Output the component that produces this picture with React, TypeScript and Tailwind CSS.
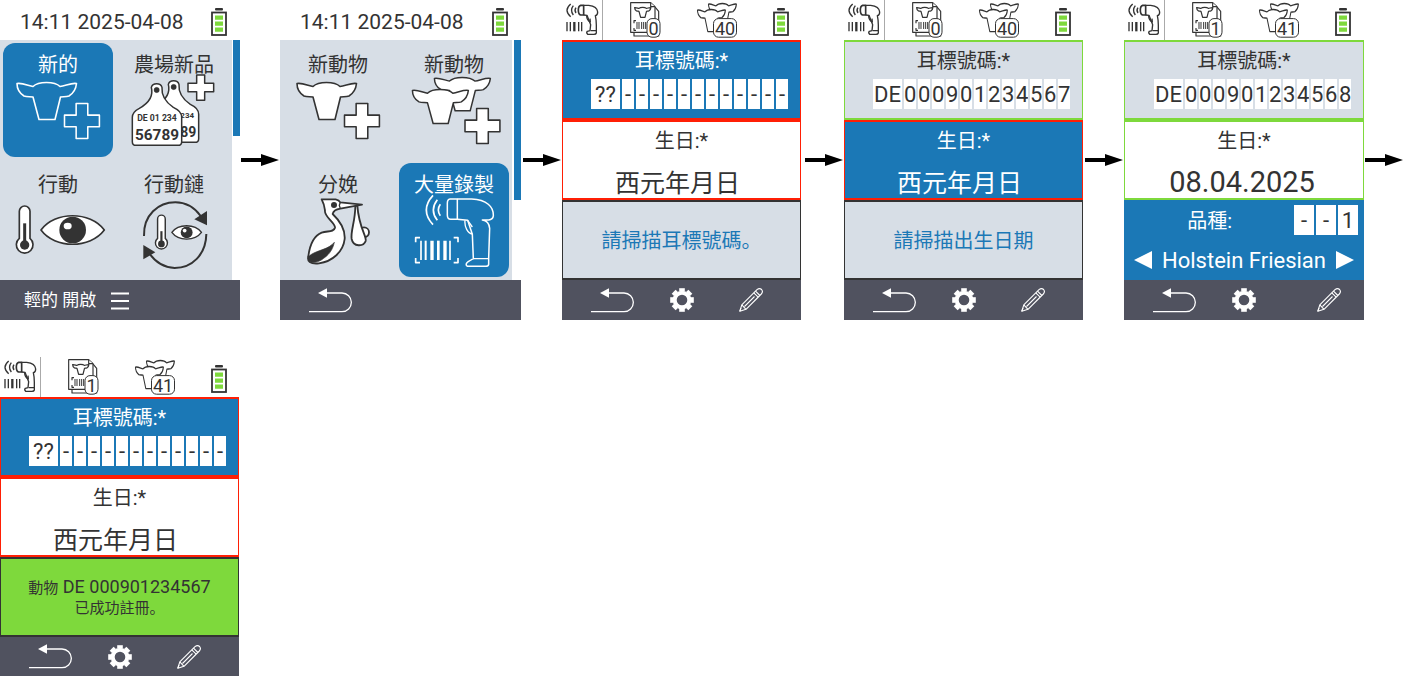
import { ReactNode, useId } from "react";

const COW =
  "M1 1C6 0 12 3 17 4C20 1 25 0 30.500 0C36 0 41 1 44 4C50 3 56 0 60.500 1C60 6 57 11 53 13.500C50 14.500 47 14 44.500 14.500L39 37L23 37L17 14.500C14 14 11 14.500 8 13.500C4 11 1 6 1 1Z";
const PLUS = "M12 0H24V12H36V24H24V36H12V24H0V12H12Z";
const THERMO =
  "M58 154A16 16 0 0 1 90 154V235A25 25 0 1 1 58 235Z";
const EYE = "M123 210C165 153 270 153 313 210C270 267 165 267 123 210Z";

/* ---------- tile drawings (110 x 84 canvas) ---------- */

function TileArt({ children }: { children: ReactNode }) {
  return (
    <svg viewBox="0 0 110 84" className="h-[84px] w-[110px] overflow-visible" aria-hidden="true">
      {children}
    </svg>
  );
}

function CowPlus({ fill, stroke }: { fill: string; stroke: string }) {
  return (
    <TileArt>
      <g fill={fill} stroke={stroke} strokeWidth="1.6" strokeLinejoin="round">
        <path d={COW} transform="translate(13 9.500)" />
        <path d={PLUS} transform="translate(61.500 30.500) scale(.97)" />
      </g>
    </TileArt>
  );
}

function CowsPlus() {
  return (
    <TileArt>
      <g fill="#fff" stroke="#333" strokeWidth="1.6" strokeLinejoin="round">
        <path d={COW} transform="translate(34.500 4.500) scale(.94 .9)" />
        <path d={COW} transform="translate(12.500 16.500) scale(.94 .92)" />
        <path d={PLUS} transform="translate(66 35.500) scale(.97)" />
      </g>
    </TileArt>
  );
}

function EarTags() {
  const tag =
    "M454 262C458 248 482 248 486 262C484 285 495 305 520 322Q545 333 545 352V425Q545 436 534 436H408Q397 436 397 425V352Q397 336 418 325C448 308 460 285 454 262Z";
  return (
    <TileArt>
      <g transform="translate(-119 -73) scale(.33333)" stroke="#333" strokeLinejoin="round" fill="#fff">
        <path d={tag} transform="translate(51 -9)" strokeWidth="4.500" />
        <circle cx="521" cy="261" r="8" fill="#333" />
        <g fill="#333" stroke="none" fontFamily="Roboto, sans-serif" fontWeight="700">
          <text x="541" y="355" fontSize="24">234</text>
          <text x="541" y="411" fontSize="42">89</text>
        </g>
        <path d={tag} strokeWidth="4.500" />
        <circle cx="470" cy="270" r="8" fill="#333" />
        <g fill="#333" stroke="none" fontFamily="Roboto, sans-serif" fontWeight="700" textAnchor="middle">
          <text x="471" y="364" fontSize="26">DE 01 234</text>
          <text x="471" y="419" fontSize="46">56789</text>
        </g>
        <path d="M590 225H614V250H641V275H614V301H590V275H564V250H590Z" strokeWidth="4.500" />
      </g>
    </TileArt>
  );
}

function ThermoEye() {
  return (
    <TileArt>
      <g transform="translate(-3 -33) scale(.33333)">
        <path d={THERMO} fill="#fff" stroke="#333" strokeWidth="5" />
        <path d="M74 190V250" stroke="#333" strokeWidth="9" />
        <circle cx="74" cy="255" r="14" fill="#333" />
        <path d={EYE} fill="#fff" stroke="#333" strokeWidth="5" strokeLinejoin="round" />
        <circle cx="218" cy="210" r="40" fill="#333" />
        <ellipse cx="203" cy="198" rx="12" ry="10" fill="#fff" />
      </g>
    </TileArt>
  );
}

function ActionChain() {
  return (
    <TileArt>
      <g transform="translate(-119 -33) scale(.33333)">
        <path d="M432 228C430 165 475 127 526 127C560 127 585 145 602 168" fill="none" stroke="#333" strokeWidth="6" />
        <path d="M621 153V196L583 178Z" fill="#333" />
        <path d="M619 222C618 285 575 324 524 324C490 322 465 305 448 280" fill="none" stroke="#333" strokeWidth="6" />
        <path d="M430 255V298L466 277Z" fill="#333" />
        <g transform="translate(431 66) scale(.72)">
          <path d={THERMO} fill="#fff" stroke="#333" strokeWidth="6" />
          <path d="M74 205V250" stroke="#333" strokeWidth="9" />
          <circle cx="74" cy="258" r="14" fill="#333" />
        </g>
        <g transform="translate(458 119) scale(.468)">
          <path d={EYE} fill="#fff" stroke="#333" strokeWidth="9" strokeLinejoin="round" />
          <circle cx="218" cy="210" r="38" fill="#333" />
          <circle cx="205" cy="198" r="12" fill="#fff" />
        </g>
      </g>
    </TileArt>
  );
}

function Stork() {
  return (
    <TileArt>
      <g transform="translate(-8 -38) scale(.33333)" fill="#fff" stroke="#333" strokeWidth="5.500" strokeLinejoin="round">
        <circle cx="267" cy="232" r="15" />
        <path d="M241 152C241 200 226 228 230 252C235 277 266 275 272 258C276 244 252 220 247 152Z" />
        <path d="M140 133H182Q192 135 196 142L261 149L196 161Q176 164 173 177C192 195 211 222 209 252C205 290 172 320 132 325C105 328 96 318 100 304C104 272 116 243 140 233C158 227 176 232 180 218C181 202 146 185 150 166Q148 148 140 133Z" />
        <path d="M196 142L193 151L196 161" fill="none" strokeWidth="4" />
        <path d="M178 262C160 284 130 284 106 300Q98 304 101 314C106 328 132 322 146 310C166 296 174 280 178 262Z" fill="#333" strokeWidth="2" />
        <circle cx="177" cy="150" r="9" fill="#333" stroke="none" />
      </g>
    </TileArt>
  );
}

function ScannerLarge() {
  return (
    <TileArt>
      <g transform="translate(-124 -38) scale(.33333)" fill="none" stroke="#fff" strokeWidth="4.500" strokeLinejoin="round">
        <path d="M496 148Q484 165 496 182M487 134Q463 165 487 196M474 121Q434 165 474 209" strokeWidth="5" />
        <path d="M547 132H525Q517 133 517 145V180Q517 193 527 193H547Z" />
        <path d="M547 132H590C635 134 656 155 655 182Q654 194 641 195H622Q642 198 644 220L641 309V328Q640 334 632 334H582Q572 334 574 326Q576 321 595 311L592 238L578 196L547 193" />
        <path d="M570 196C568 216 578 235 592 237M578 196L592 216M595 311H641" strokeWidth="4" />
        <path d="M435 248H422V262M536 248H549V262M435 323H422V309M536 323H549V309" strokeWidth="5" />
        <path d="M438 257V315M525 257V315" strokeWidth="5" />
        <path d="M452 257V315" strokeWidth="6" />
        <path d="M471 257V315M510 257V315" strokeWidth="10" />
        <path d="M490 257V315" strokeWidth="8" />
      </g>
    </TileArt>
  );
}

/* ---------- status bar drawings ---------- */

function Battery() {
  return (
    <svg viewBox="0 0 16 28" className="h-7 w-4 shrink-0" role="img" aria-label="電池">
      <rect x="4" y="0" width="8" height="2.500" rx="1" fill="#333" />
      <rect x="1" y="4.500" width="14" height="22.500" fill="#fff" stroke="#333" strokeWidth="1.8" />
      <path d="M4 7.500h8v4.300h-8zM4 13.500h8v4.300h-8zM4 19.500h8v4.300h-8z" fill="#7ed93c" />
    </svg>
  );
}

function ScannerSmall() {
  return (
    <svg viewBox="0 0 40 40" className="size-10" aria-hidden="true">
      <g transform="translate(-6 0) scale(.33333)" fill="none" stroke="#333" strokeWidth="4" strokeLinejoin="round">
        <path d="M60 23Q54 31 60 39M52 17Q41 31 52 45M44 12Q22 31 44 50" />
        <path d="M83 16H74Q67 18 67 30Q67 43 74 45H83Z" strokeWidth="5" />
        <path d="M83 16H98Q124 19 125 36Q125 46 118 47Q121 60 121 75V99Q120 103 114 103H95Q90 98 94 94L102 92L104 74L93 46L83 45" />
        <path d="M92 47Q92 60 103 66L102 56M104 92H121" strokeWidth="4" />
        <path d="M33 66V94M43 66V94M68 66V94M77 66V94" strokeWidth="4" />
        <path d="M55 66V94" strokeWidth="7" />
      </g>
    </svg>
  );
}

function Badge({ x, width, value }: { x: number; width: number; value: string }) {
  return (
    <>
      <rect x={x} y="18.600" width={width} height="18.600" rx="5" fill="#fff" stroke="#333" />
      <text
        x={x + width / 2}
        y="34.500"
        textAnchor="middle"
        fontFamily="Roboto, sans-serif"
        fontSize="18"
        fill="#333"
      >
        {value}
      </text>
    </>
  );
}

function ScannedSheets({ count }: { count: string }) {
  return (
    <svg viewBox="0 0 31 40" className="h-10 w-[31px] shrink-0 overflow-visible" role="img" aria-label="已掃描">
      <g transform="translate(-74 0) scale(.33333)" fill="#fff" stroke="#333" strokeWidth="3.500" strokeLinejoin="round">
        <path d="M234 22H298L308 34V108H234Z" />
        <path d="M224 8H284L297 20V97H224Z" />
        <path d="M284 8V20H297" />
        <path d={COW} transform="translate(235 22) scale(.82)" strokeWidth="4.500" />
        <path d="M240 62H234V70M234 84V91H240M280 62H286" fill="none" />
        <path d="M243 66V87M249 66V87M257 66V87M263 66V87M269 66V87" fill="none" strokeWidth="3" />
      </g>
      <Badge x={17} width={13} value={count} />
    </svg>
  );
}

function HerdCount({ count }: { count: string }) {
  return (
    <svg viewBox="0 0 40 40" className="size-10 shrink-0 overflow-visible" role="img" aria-label="動物數量">
      <g fill="#fff" stroke="#333" strokeWidth="2.200" strokeLinejoin="round">
        <path d={COW} transform="translate(11 3.500) scale(.47 .6)" />
        <path d={COW} transform="translate(0 9.500) scale(.47 .6)" />
      </g>
      <Badge x={16.500} width={23} value={count} />
    </svg>
  );
}

/* ---------- footer drawings ---------- */

function ReturnIcon() {
  return (
    <svg viewBox="0 0 43 25" className="h-[25px] w-[43px]" aria-hidden="true">
      <path d="M9 5L18 .3V9.700Z" fill="#fff" />
      <path d="M17 5H33A9.300 9.300 0 0 1 33 23.700H0" fill="none" stroke="#fff" strokeWidth="1.300" />
    </svg>
  );
}

function GearIcon() {
  return (
    <svg viewBox="-12 -12 24 24" className="size-6" aria-hidden="true">
      <circle r="7.300" fill="none" stroke="#fff" strokeWidth="4" />
      {[0, 45, 90, 135, 180, 225, 270, 315].map((angle) => (
        <path key={angle} d="M-2.800 -8.500V-11.800H2.800V-8.500Z" fill="#fff" transform={`rotate(${angle})`} />
      ))}
    </svg>
  );
}

function PencilIcon() {
  return (
    <svg viewBox="0 0 24 24" className="size-6" fill="none" stroke="#fff" strokeWidth="1.100" strokeLinejoin="round" aria-hidden="true">
      <path d="M.8 23.300L2.800 16.800L18 1.600Q20.500 -.4 22.600 1.500Q24.400 3.800 22.300 6L7 21.300Z" />
      <path d="M2.800 16.800L7 21.300M14.800 4.800L19.200 9.200M16.500 3.100L20.900 7.500M15.500 8.500L5.500 18.500M.8 23.300L2 20" />
    </svg>
  );
}

function StepArrow() {
  return (
    <svg viewBox="0 0 38 12" className="h-3 w-[38px]" aria-hidden="true">
      <path d="M0 4H20V0L38 6L20 12V8H0Z" fill="#000" />
    </svg>
  );
}

/* ---------- screens ---------- */

type Tile = { label: string; art: ReactNode; active?: boolean };

function MenuScreen({
  tiles,
  thumb,
  wide,
  footer,
}: {
  tiles: Tile[];
  thumb: string;
  wide?: boolean;
  footer: ReactNode;
}) {
  return (
    <section className={`flex shrink-0 flex-col ${wide ? "w-[241px]" : "w-60"}`}>
      <header className="flex h-10 items-center justify-between pl-5 pr-[13px] pt-1">
        <time className="text-[21px] leading-8">14:11 2025-04-08</time>
        <Battery />
      </header>
      <div className="flex h-60 justify-between">
        <nav className="grid w-[232px] grid-cols-2 grid-rows-2 bg-[#d7dee6]">
          {tiles.map((tile, i) => (
            <button
              key={i}
              type="button"
              className={`m-[3px] flex flex-col items-center rounded-xl text-xl ${
                tile.active ? "bg-[#1b78b6] text-white" : ""
              }`}
            >
              <span className="h-[30px] pt-3 leading-5">{tile.label}</span>
              {tile.art}
            </button>
          ))}
        </nav>
        <div className="w-[7px]">
          <div className={`bg-[#1b78b6] ${thumb}`} />
        </div>
      </div>
      <footer className="flex h-10 items-center bg-[#50525f] text-white">{footer}</footer>
    </section>
  );
}

type Tone = "plain" | "soft" | "active";
const TONES: Record<Tone, string> = {
  plain: "bg-white",
  soft: "bg-[#d7dee6]",
  active: "bg-[#1b78b6] text-white",
};

function Panel({ tone, valid, children }: { tone: Tone; valid: boolean; children: ReactNode }) {
  return (
    <div
      className={`flex h-20 flex-col border-x border-y-2 pt-[5px] ${TONES[tone]} ${
        valid ? "border-[#7ed93c]" : "border-[#ff1f05]"
      }`}
    >
      {children}
    </div>
  );
}

function EarTagField({ cells, tone, valid }: { cells: string[]; tone: Tone; valid: boolean }) {
  const id = useId();
  return (
    <Panel tone={tone} valid={valid}>
      <label htmlFor={id} className="text-center text-xl leading-7">
        耳標號碼:*
      </label>
      <div className="mt-1 flex justify-end gap-0.5 pr-3">
        {cells.map((cell, i) => (
          <input
            key={i}
            id={i === 0 ? id : undefined}
            aria-label={i === 0 ? undefined : `耳標號碼 ${i + 1}`}
            defaultValue={cell}
            className={`h-[30px] bg-white text-center text-[22px] text-[#333] ${i === 0 ? "w-[29px]" : "w-3"}`}
          />
        ))}
      </div>
    </Panel>
  );
}

function BirthField({ value, tone, valid }: { value?: string; tone: Tone; valid: boolean }) {
  const id = useId();
  return (
    <Panel tone={tone} valid={valid}>
      <label htmlFor={id} className="text-center text-xl leading-7">
        生日:*
      </label>
      <input
        id={id}
        defaultValue={value}
        placeholder="西元年月日"
        className={`mt-auto h-[30px] w-full bg-transparent text-center text-[29px] placeholder:text-[25px] placeholder:text-current placeholder:opacity-100 ${
          value ? "pr-1" : "pr-2"
        }`}
      />
    </Panel>
  );
}

function Message({ success, children }: { success?: boolean; children: ReactNode }) {
  return (
    <p
      className={`flex h-20 flex-col items-center justify-center border-x border-y-2 border-[#333] ${
        success ? "bg-[#7ed93c] text-[18px] leading-5" : "bg-[#d7dee6] pt-0.5 text-xl text-[#1b78b6]"
      }`}
    >
      {children}
    </p>
  );
}

function BreedField() {
  const id = useId();
  return (
    <div className="flex h-20 flex-col bg-[#1b78b6] text-white">
      <div className="flex h-10 items-center justify-end gap-0.5 pr-1.5">
        <label htmlFor={id} className="mr-[60px] pt-0.5 text-xl">
          品種:
        </label>
        {["-", "-", "1"].map((cell, i) => (
          <input
            key={i}
            id={i === 0 ? id : undefined}
            aria-label={i === 0 ? undefined : `品種 ${i + 1}`}
            defaultValue={cell}
            className="h-[30px] w-5 bg-white text-center text-[22px] text-[#333]"
          />
        ))}
      </div>
      <div className="flex h-10 items-center justify-between px-[10px]">
        <button type="button" aria-label="上一個">
          <svg viewBox="0 0 18 18" className="size-[18px]" aria-hidden="true">
            <path d="M18 0V18L0 9Z" fill="#fff" />
          </svg>
        </button>
        <span className="text-[22px]">Holstein Friesian</span>
        <button type="button" aria-label="下一個">
          <svg viewBox="0 0 18 18" className="size-[18px]" aria-hidden="true">
            <path d="M0 0V18L18 9Z" fill="#fff" />
          </svg>
        </button>
      </div>
    </div>
  );
}

function FormScreen({
  sheets,
  herd,
  wide,
  children,
}: {
  sheets: string;
  herd: string;
  wide?: boolean;
  children: ReactNode;
}) {
  return (
    <section className={`flex shrink-0 flex-col ${wide ? "w-60" : "w-[239px]"}`}>
      <header className="flex h-10 items-center">
        <div className="w-[41px] shrink-0 border-r border-[#aaa]">
          <ScannerSmall />
        </div>
        <div className="flex items-center gap-9 pl-[27px]">
          <ScannedSheets count={sheets} />
          <HerdCount count={herd} />
          <div className="pt-1">
            <Battery />
          </div>
        </div>
      </header>
      {children}
      <footer className="flex min-h-[39px] flex-1 items-center bg-[#50525f] pl-[29px]">
        <button type="button" aria-label="返回">
          <ReturnIcon />
        </button>
        <button type="button" aria-label="設定" className="ml-9">
          <GearIcon />
        </button>
        <button type="button" aria-label="編輯" className={wide ? "ml-[61px]" : "ml-[45px]"}>
          <PencilIcon />
        </button>
      </footer>
    </section>
  );
}

const EMPTY_TAG = ["??", ..."------------"];

export default function App() {
  const screens: ReactNode[] = [
    <MenuScreen
      thumb="h-24"
      tiles={[
        { label: "新的", art: <CowPlus fill="none" stroke="#fff" />, active: true },
        { label: "農場新品", art: <EarTags /> },
        { label: "行動", art: <ThermoEye /> },
        { label: "行動鏈", art: <ActionChain /> },
      ]}
      footer={
        <button type="button" className="flex items-center gap-[15px] pl-6 pt-0.5 text-[17px]">
          輕的 開啟
          <svg viewBox="0 0 18 18" className="size-[18px]" aria-hidden="true">
            <path d="M0 1.500H18M0 9H18M0 16.500H18" stroke="#fff" strokeWidth="2" />
          </svg>
        </button>
      }
    />,
    <MenuScreen
      wide
      thumb="h-40"
      tiles={[
        { label: "新動物", art: <CowPlus fill="#fff" stroke="#333" /> },
        { label: "新動物", art: <CowsPlus /> },
        { label: "分娩", art: <Stork /> },
        { label: "大量錄製", art: <ScannerLarge />, active: true },
      ]}
      footer={
        <button type="button" aria-label="返回" className="pl-[29px]">
          <ReturnIcon />
        </button>
      }
    />,
    <FormScreen sheets="0" herd="40">
      <EarTagField cells={EMPTY_TAG} tone="active" valid={false} />
      <BirthField tone="plain" valid={false} />
      <Message>請掃描耳標號碼。</Message>
    </FormScreen>,
    <FormScreen sheets="0" herd="40">
      <EarTagField cells={["DE", ..."000901234567"]} tone="soft" valid />
      <BirthField tone="active" valid={false} />
      <Message>請掃描出生日期</Message>
    </FormScreen>,
    <FormScreen sheets="1" herd="41" wide>
      <EarTagField cells={["DE", ..."000901234568"]} tone="soft" valid />
      <BirthField value="08.04.2025" tone="plain" valid />
      <BreedField />
    </FormScreen>,
    <FormScreen sheets="1" herd="41">
      <EarTagField cells={EMPTY_TAG} tone="active" valid={false} />
      <BirthField tone="plain" valid={false} />
      <Message success>
        <span>
          <span className="text-[15px]">動物</span> DE 000901234567
        </span>
        <span className="text-[15px]">已成功註冊。</span>
      </Message>
    </FormScreen>,
  ];

  return (
    <main className="grid grid-cols-[280fr_282fr_282fr_280fr_280fr] gap-y-[37px] bg-white font-['Roboto','Noto_Sans_CJK_SC',sans-serif] text-[#333]">
      {screens.map((screen, i) => (
        <div key={i} className="flex">
          {screen}
          {i < screens.length - 1 && (
            <div className="flex flex-1 justify-end pr-px pt-[154px]">
              <StepArrow />
            </div>
          )}
        </div>
      ))}
    </main>
  );
}
